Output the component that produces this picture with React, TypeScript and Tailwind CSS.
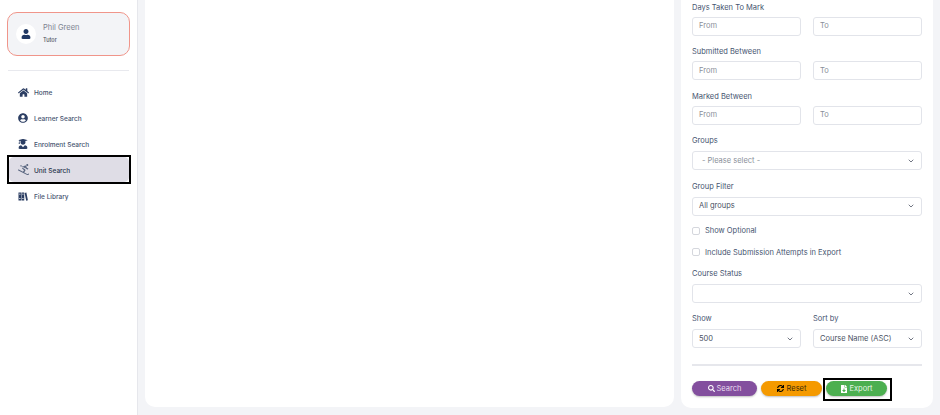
import type { ReactNode } from "react";
import { FaFileDownload, FaHome, FaSearch, FaSkiing, FaSync, FaUser, FaUserCircle, FaUserGraduate } from "react-icons/fa";
import { ChevronDown } from "lucide-react";

function BooksIcon({ className }: { className?: string }) {
  return (
    <svg viewBox="0 0 24 22" className={className} fill="currentColor" aria-hidden>
      <path d="M1 1h6.500v20H1zM8.500 1H15v20H8.500zM16 2.500l4.200-1.200L24 20l-4.200 1.200z" />
      <path d="M2.500 4h3.500v2H2.500zM10 4h3.500v2H10zM2.500 15h3.500v2H2.500zM10 15h3.500v2H10z" fill="#fff" />
    </svg>
  );
}

const navItems = [
  { label: "Home", icon: <FaHome className="size-[11px] text-[#2c3e63]" /> },
  { label: "Learner Search", icon: <FaUserCircle className="size-[10px] text-[#2c3e63]" /> },
  { label: "Enrolment Search", icon: <FaUserGraduate className="size-[10px] text-[#2c3e63]" /> },
  { label: "Unit Search", icon: <FaSkiing className="size-[11px] text-[#5a6780]" />, active: true },
  { label: "File Library", icon: <BooksIcon className="h-[9px] w-[10px] text-[#2c3e63]" /> },
];

function Label({ children }: { children: ReactNode }) {
  return <p className="text-[7.5px] leading-[11px] text-[#46546f]">{children}</p>;
}

function TextBox({ placeholder }: { placeholder: string }) {
  return (
    <div className="flex h-[19px] items-center rounded-[3px] border border-[#e2e4ea] bg-white px-[6px] text-[7.5px] text-[#8a8f99]">
      {placeholder}
    </div>
  );
}

function SelectBox({ value, muted }: { value?: string; muted?: boolean }) {
  return (
    <div className={`flex h-[19px] items-center justify-between rounded-[3px] border border-[#e2e4ea] bg-white pr-[6px] text-[7.5px] ${muted ? "pl-[9px] text-[#8a8f99]" : "pl-[6px] text-[#4b5263]"}`}>
      <span>{value}</span>
      <ChevronDown className="size-[8px] text-[#555c6b]" strokeWidth={2.5} />
    </div>
  );
}

function RangeField({ label }: { label: string }) {
  return (
    <div className="flex flex-col gap-[4px]">
      <Label>{label}</Label>
      <div className="grid grid-cols-2 gap-[12px]">
        <TextBox placeholder="From" />
        <TextBox placeholder="To" />
      </div>
    </div>
  );
}

function Check({ label, className = "" }: { label: string; className?: string }) {
  return (
    <div className={`flex items-center gap-[5px] ${className}`}>
      <span className="size-[8px] rounded-[2px] border border-[#d5d7dd] bg-white" />
      <span className="text-[7.5px] leading-[11px] text-[#46546f]">{label}</span>
    </div>
  );
}

export default function App() {
  return (
    <div className="flex h-[415px] w-[940px] overflow-hidden bg-[#f3f4f7] font-['Inter',sans-serif]">
      <aside className="flex w-[138px] shrink-0 flex-col border-r border-[#e6e7ec] bg-white px-[7px] pt-[12px]">
        <div className="flex h-[44px] w-[123px] items-center gap-[7px] rounded-[10px] border border-[#f0958a] bg-[#f3f4f7] pl-[8px]">
          <div className="flex size-[20px] items-center justify-center rounded-full bg-white">
            <FaUser className="size-[10px] text-[#1f3763]" />
          </div>
          <div className="-mt-[2.5px]">
            <p className="text-[7.5px] leading-[11px] text-[#7d8391]">Phil Green</p>
            <p className="mt-[3.5px] text-[5.5px] font-medium leading-[8px] text-[#4b5263]">Tutor</p>
          </div>
        </div>
        <div className="mx-[1px] mt-[14px] mb-[9px] h-px bg-[#e8e9ee]" />
        <nav className="flex flex-col gap-[2px]">
          {navItems.map((item) =>
            item.active ? (
              <div key={item.label} className="-mt-[3.5px] -mb-[1.5px] -mr-[1px] h-[29px] border-2 border-black bg-white">
                <div className="flex h-full items-center gap-[5px] rounded-[5px] bg-[#dfdde6] pl-[8px]">
                  <span className="flex w-[12px] justify-center">{item.icon}</span>
                  <span className="mt-[5px] text-[6.5px] font-medium text-[#27324a]">{item.label}</span>
                </div>
              </div>
            ) : (
              <div key={item.label} className="flex h-[24px] items-center gap-[5px] pl-[10px]">
                <span className="flex w-[12px] justify-center">{item.icon}</span>
                <span className="mt-[4px] text-[6.5px] font-medium text-[#46546f]">{item.label}</span>
              </div>
            ),
          )}
        </nav>
      </aside>

      <main className="ml-[7px] mb-[8px] w-[529px] rounded-b-[10px] bg-white" />

      <section className="mx-[7px] mb-[7px] flex w-[252px] flex-col rounded-b-[10px] bg-white px-[11px] pt-[1.5px]">
        <div className="flex flex-col gap-[10.5px]">
          <RangeField label="Days Taken To Mark" />
          <RangeField label="Submitted Between" />
          <RangeField label="Marked Between" />
          <div className="flex flex-col gap-[5px]">
            <Label>Groups</Label>
            <SelectBox value="- Please select -" muted />
          </div>
          <div className="flex flex-col gap-[5px]">
            <Label>Group Filter</Label>
            <SelectBox value="All groups" />
          </div>
          <Check label="Show Optional" className="-mt-[1px]" />
          <Check label="Include Submission Attempts in Export" />
          <div className="flex flex-col gap-[5px]">
            <Label>Course Status</Label>
            <SelectBox />
          </div>
          <div className="-mt-[0.5px] grid grid-cols-2 gap-[12px]">
            <div className="flex flex-col gap-[5px]">
              <Label>Show</Label>
              <SelectBox value="500" />
            </div>
            <div className="flex flex-col gap-[5px]">
              <Label>Sort by</Label>
              <SelectBox value="Course Name (ASC)" />
            </div>
          </div>
        </div>
        <div className="mt-[16px] h-[2px] bg-[#e6e7ec]" />
        <div className="mt-[12px] flex items-start">
          <button className="mt-[3px] flex h-[15px] w-[65px] items-center justify-center gap-[2px] rounded-full bg-[#834f9e] text-[7.5px] text-[#e9deef] shadow-[0_1px_2px_rgba(0,0,0,0.25)]">
            <FaSearch className="size-[7px] text-white" /> Search
          </button>
          <button className="mt-[3px] ml-[4px] flex h-[15px] w-[61px] items-center justify-center gap-[3px] rounded-full bg-[#f59a00] text-[7.5px] text-[#3a2a08] shadow-[0_1px_2px_rgba(0,0,0,0.25)]">
            <FaSync className="size-[7px] text-black" /> Reset
          </button>
          <div className="ml-[1px] h-[23px] w-[69px] border-2 border-black pl-[1px] pt-[1px]">
            <button className="flex h-[15px] w-[61px] items-center justify-center gap-[1px] rounded-full bg-[#4caf50] text-[7.5px] text-[#e6f5e6] shadow-[0_1px_2px_rgba(0,0,0,0.25)]">
              <FaFileDownload className="size-[8px] text-white" /> Export
            </button>
          </div>
        </div>
      </section>
    </div>
  );
}
